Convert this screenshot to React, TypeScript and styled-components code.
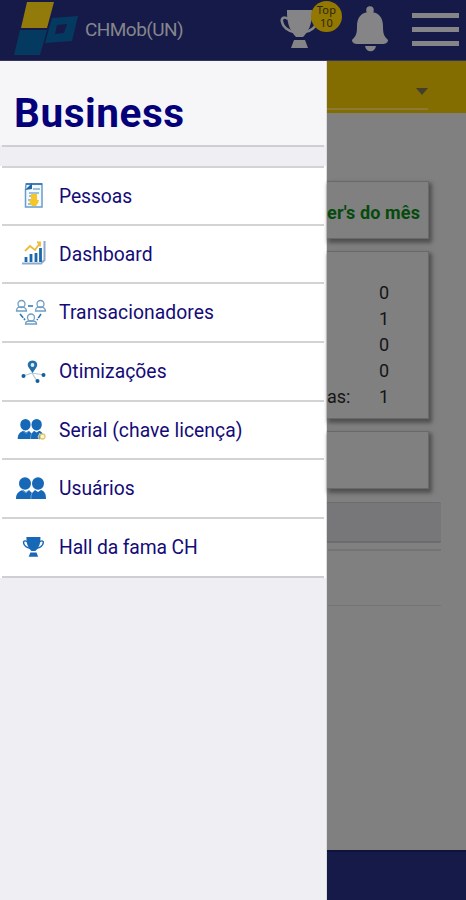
import React from "react";
import styled, { createGlobalStyle } from "styled-components";

const Global = createGlobalStyle`
  * { box-sizing: border-box; }
  body { margin: 0; background: #808080; font-family: Roboto, "Noto Sans", sans-serif; }
`;

const Screen = styled.div`
  width: 466px;
  height: 900px;
  overflow: hidden;
  display: flex;
  flex-direction: column;
  background: #808080;
`;

const Header = styled.header`
  height: 61px;
  flex: none;
  display: flex;
  align-items: flex-start;
  background: #161a49;
  border-bottom: 1px solid #34365c;
`;

const Logo = styled.svg`
  width: 66px;
  height: 58px;
  margin-left: 14px;
  flex: none;
`;

const AppName = styled.span`
  width: 200px;
  margin-left: 5px;
  padding-top: 18px;
  font-size: 19px;
  line-height: 23px;
  letter-spacing: -0.55px;
  color: #85868c;
  white-space: nowrap;
`;

const TrophyButton = styled.div`
  position: relative;
  width: 64px;
  height: 58px;
  margin-left: -6px;
`;

const Badge = styled.span`
  position: absolute;
  left: 32px;
  top: 1px;
  width: 31px;
  height: 31px;
  border-radius: 50%;
  padding-top: 2px;
  background: #927700;
  color: #2c2813;
  font: 11px/13px "Noto Sans", sans-serif;
  letter-spacing: 0.3px;
  text-align: center;
`;

const Bell = styled.svg`
  width: 38px;
  height: 48px;
  margin: 5px 0 0 8px;
`;

const Burger = styled.div`
  width: 47px;
  margin: 13px 0 0 23px;
  display: flex;
  flex-direction: column;
  gap: 9px;
`;

const BurgerBar = styled.span`
  height: 5px;
  background: #858587;
`;

const Body = styled.div`
  flex: 1;
  min-height: 0;
  display: flex;
`;

const Drawer = styled.aside`
  width: 327px;
  flex: none;
  background: #eeeef3;
  border-right: 1px solid #dcdce0;
`;

const DrawerTitle = styled.h1`
  height: 84px;
  margin: 0;
  padding: 28px 0 0 14px;
  background: #f6f6f9;
  color: #04007a;
  font-size: 40.5px;
  line-height: 48px;
  font-weight: 700;
  letter-spacing: 0.55px;
`;

const Divider = styled.div<{ $gap: number }>`
  height: ${(p) => p.$gap}px;
  margin: 0 2px;
  border-top: 2px solid #cfcfd3;
`;

const Menu = styled.ul`
  list-style: none;
  margin: 0;
  padding: 0 2px;
  background: #fff;
  display: grid;
  grid-template-rows: 58px 58px 59px 59px 58px 59px 61px;
`;

const MenuItem = styled.li`
  display: flex;
  align-items: center;
  border-top: 2px solid #d3d3d6;
  &:last-child { border-bottom: 2px solid #cfcfd3; }
`;

const IconSlot = styled.span`
  width: 57px;
  height: 34px;
  flex: none;
  svg { display: block; width: 34px; height: 34px; margin-left: 12px; }
`;

const Label = styled.span<{ $track: number }>`
  font-size: 19.3px;
  line-height: 24px;
  letter-spacing: ${(p) => p.$track}px;
  color: #140b78;
  padding-top: 1px;
  white-space: nowrap;
`;

const Content = styled.main`
  flex: 1;
  min-width: 0;
  display: flex;
  flex-direction: column;
`;

const FilterBar = styled.div`
  height: 52px;
  flex: none;
  background: #836d00;
  padding-right: 38px;
`;

const Select = styled.div`
  height: 49px;
  border-bottom: 2px solid #8a7a34;
  display: flex;
  justify-content: flex-end;
  align-items: flex-start;
  svg { width: 12px; height: 7px; margin-top: 27px; }
`;

const Cards = styled.section`
  height: 389px;
  flex: none;
  padding: 68px 37px 0 0;
  display: flex;
  flex-direction: column;
  gap: 12px;
`;

const Card = styled.div<{ $h: number }>`
  height: ${(p) => p.$h}px;
  border: 1px solid #696969;
  border-left: 0;
  box-shadow: 2px 3px 4px 1px #505050;
  background: #808080;
`;

const Winners = styled.div`
  display: flex;
  justify-content: flex-end;
  padding: 19px 8px 0 0;
  font-size: 18px;
  line-height: 24px;
  font-weight: 700;
  letter-spacing: 0.12px;
  color: #064a0c;
  white-space: nowrap;
`;

const Stats = styled.div`
  padding-top: 27px;
`;

const Stat = styled.div`
  height: 26px;
  display: grid;
  grid-template-columns: 23px 68px;
  align-items: center;
  font-size: 18px;
  color: #151515;
`;

const StatName = styled.span`
  justify-self: start;
  letter-spacing: -0.1px;
`;

const StatValue = styled.span`
  text-align: center;
`;

const Panel = styled.div`
  height: 41px;
  margin-right: 25px;
  background: #77777a;
  border-top: 1px solid #6d6d70;
  border-bottom: 2px solid #6c6c6f;
  border-radius: 0 2px 2px 0;
`;

const Strip = styled.div`
  height: 57px;
  margin: 6px 25px 0 1px;
  border-top: 2px solid #747475;
  border-bottom: 1px solid #747475;
`;

const Footer = styled.footer`
  height: 50px;
  margin-top: auto;
  background: #161a49;
  border-top: 2px solid #10133c;
`;

const Cup = ({ color }: { color: string }) => (
  <g>
    <path d="M7 0h25v3c0 12-4 19-9 24h-7C11 22 7 15 7 3Z" fill={color} />
    <path d="M8 9C4 6 1 8 2 12c1 5 6 9 12 10M31 9c4-3 7-1 6 3-1 5-6 9-12 10" fill="none" stroke={color} strokeWidth="2.6" />
    <path d="M14 30h11l3 8H11Z" fill={color} />
  </g>
);

const People = ({ small }: { small?: boolean }) => (
  <g transform={small ? "translate(2 1) scale(.86 .93)" : undefined} fill="#1769b7">
    <ellipse cx="11" cy="11.5" rx="6" ry="6.2" />
    <ellipse cx="24" cy="11.5" rx="6" ry="6.2" />
    <path d="M2 27c0-5 2-7.5 7-9l3 2 3-2 3 3 3-3 3 2 3-2c4 1.500 5 4 5 9Z" />
    <path d="M17 27v-3l1-3 2-2M8 18l4 3 3-3" fill="none" stroke="#8cb9de" strokeWidth=".7" />
  </g>
);

const icons: Record<string, React.ReactNode> = {
  people: (
    <svg viewBox="0 0 34 34">
      <path d="M12 5h16v23H11.500V11Z" fill="#f4f9fc" stroke="#6a9dc9" strokeWidth="1.5" />
      <path d="M11 11l7-7v6Z" fill="#2366a5" />
      <path d="M12 5h16" stroke="#2b6cab" strokeWidth="1.5" />
      <path d="M19 10h7M15 14h10M15 17h3M14 21h3M14 25h3" stroke="#7daed4" strokeWidth="1.3" />
      <path d="M17 15h6v6h2l-1 3-2 3h-4l-2-3-1-3h2Z" fill="#f5c52a" />
    </svg>
  ),
  chart: (
    <svg viewBox="0 0 34 34" fill="none">
      <path d="M8 26.500h20M30.500 4v19l-3 3" stroke="#8daacb" strokeWidth="2" />
      <path d="M12 25v-5M17 25v-8M22 25v-9M26.500 25V11" stroke="#1b69aa" strokeWidth="2.800" />
      <path d="M11 14l5-5 5 4 5-7M23 5.500h3v4" stroke="#ebbc3e" strokeWidth="1.8" />
    </svg>
  ),
  network: (
    <svg viewBox="0 0 34 34" fill="none" stroke="#709fc3" strokeWidth="1.3">
      <circle cx="7.5" cy="8" r="3.5" />
      <path d="M2.500 15c0-3 2-4 3-4h4c2 1 3 2 3 4Z" />
      <circle cx="26.500" cy="8" r="3.500" />
      <path d="M21.500 15c0-3 2-4 3-4h4c2 1 3 2 3 4Z" />
      <circle cx="17" cy="21.500" r="3.500" />
      <path d="M11.500 28c0-3 2-3 4-3h3c2 0 4 1 4 3Z" />
      <path d="M14 10h5M6 18l5 6M27 18l-4 6" stroke="#2b76ae" strokeWidth="1.6" strokeDasharray="5 1" />
    </svg>
  ),
  route: (
    <svg viewBox="0 0 34 34">
      <path d="M9 21l9-3 12 2M18 18l5 8" fill="none" stroke="#b7c7d3" strokeWidth="1.2" />
      <path d="M18.500 18l-3.500-5c-3-4 0-7.500 3.500-7.500s6.500 3.500 3.500 7.500Z" fill="#236faa" />
      <circle cx="18.500" cy="10" r="1.9" fill="#dceefa" />
      <g fill="#145d9d"><circle cx="9.500" cy="21" r="2" /><circle cx="29.500" cy="20" r="2" /><circle cx="23.500" cy="26" r="2" /></g>
    </svg>
  ),
  serial: (
    <svg viewBox="0 0 34 34">
      <People small />
      <circle cx="28.500" cy="23.500" r="2.500" fill="#fff8d9" stroke="#dec773" strokeWidth="1.3" />
      <path d="M26 20l-2 4 2 3" fill="none" stroke="#e8dca0" strokeWidth="1" />
    </svg>
  ),
  users: <svg viewBox="0 0 34 34"><People /></svg>,
  cup: (
    <svg viewBox="0 0 34 34">
      <g transform="translate(8.500 6) scale(.56 .52)"><Cup color="#1769b7" /></g>
    </svg>
  ),
};

const items = [
  { icon: "people", label: "Pessoas", track: -0.08 },
  { icon: "chart", label: "Dashboard", track: 0.05 },
  { icon: "network", label: "Transacionadores", track: 0.08 },
  { icon: "route", label: "Otimizações", track: 0.04 },
  { icon: "serial", label: "Serial (chave licença)", track: 0.05 },
  { icon: "users", label: "Usuários", track: 0 },
  { icon: "cup", label: "Hall da fama CH", track: -0.1 },
];

const stats = [
  { value: "0" },
  { value: "1" },
  { value: "0" },
  { value: "0" },
  { name: "as:", value: "1" },
];

export default function App() {
  return (
    <>
      <Global />
      <Screen>
        <Header>
          <Logo viewBox="14 0 66 58">
            <path d="M27 2h27l-7 26H21Z" fill="#927b0b" />
            <path d="M20 30h27l-7 25H14Z" fill="#043a60" />
            <path fillRule="evenodd" d="M52 18l26-2-6 25-27 2Zm5 7-2 9 9-1 3-9Z" fill="#043a60" />
          </Logo>
          <AppName>CHMob(UN)</AppName>
          <TrophyButton>
            <svg width="64" height="58" viewBox="279 0 64 58">
              <g transform="translate(280 10)"><Cup color="#858587" /></g>
            </svg>
            <Badge>Top<br />10</Badge>
          </TrophyButton>
          <Bell viewBox="0 0 38 48" fill="#858587">
            <circle cx="19" cy="5" r="3.800" />
            <path d="M19 7c9 0 13 6 13 14 0 8 1 10 5 14 0 3-3 4-5 4H6c-2 0-5-1-5-4 4-4 5-6 5-14C6 13 10 7 19 7ZM14 41h11c-1 7-10 7-11 0Z" />
          </Bell>
          <Burger><BurgerBar /><BurgerBar /><BurgerBar /></Burger>
        </Header>
        <Body>
          <Drawer>
            <DrawerTitle>Business</DrawerTitle>
            <Divider $gap={21} />
            <Menu>
              {items.map((item) => (
                <MenuItem key={item.label}>
                  <IconSlot>{icons[item.icon]}</IconSlot>
                  <Label $track={item.track}>{item.label}</Label>
                </MenuItem>
              ))}
            </Menu>
          </Drawer>
          <Content>
            <FilterBar>
              <Select>
                <svg viewBox="0 0 12 7"><path d="M0 0h12L6 7Z" fill="#443f2c" /></svg>
              </Select>
            </FilterBar>
            <Cards>
              <Card $h={58}><Winners>er's do mês</Winners></Card>
              <Card $h={168}>
                <Stats>
                  {stats.map((s, i) => (
                    <Stat key={i}>
                      <StatName>{s.name}</StatName>
                      <StatValue>{s.value}</StatValue>
                    </Stat>
                  ))}
                </Stats>
              </Card>
              <Card $h={58} />
            </Cards>
            <Panel />
            <Strip />
            <Footer />
          </Content>
        </Body>
      </Screen>
    </>
  );
}
